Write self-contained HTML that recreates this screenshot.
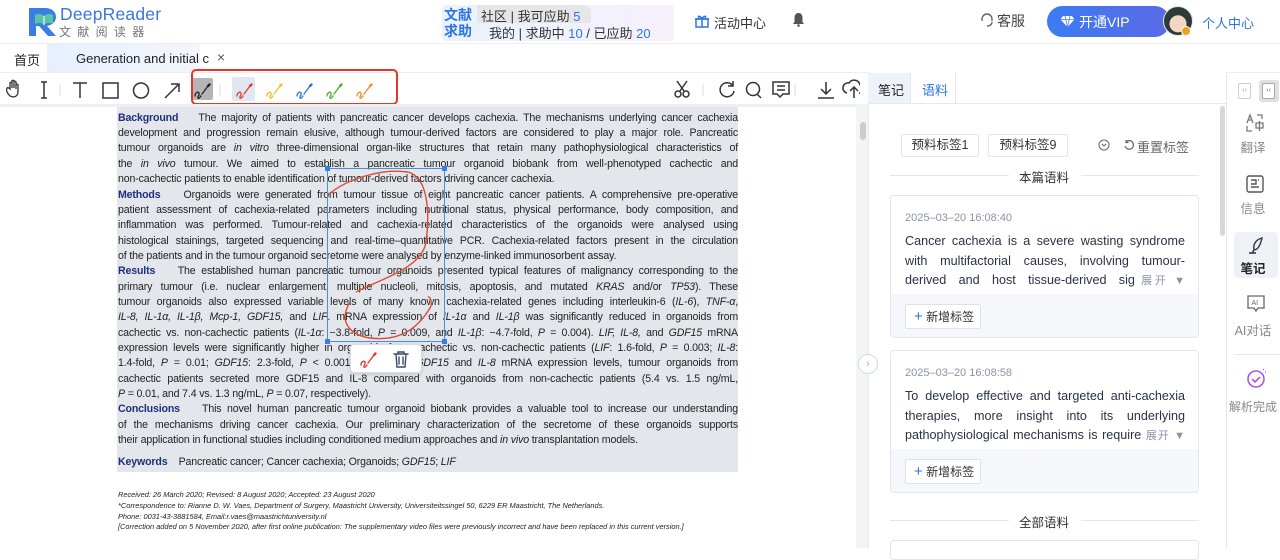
<!DOCTYPE html>
<html><head><meta charset="utf-8">
<style>
*{margin:0;padding:0;box-sizing:border-box}
body{width:1280px;height:548px;overflow:hidden;background:#fff;font-family:"Liberation Sans","Noto Sans CJK SC",sans-serif;position:relative;color:#333}
.abs{position:absolute}
.doc{position:absolute;left:0;top:104px;width:868px;height:444px;background:#fff;border-top:3px solid #eef0f3}
.hl{position:absolute;left:117px;top:107px;width:621px;height:365px;background:#e3e7ec}
.ln{position:absolute;left:118px;width:620px;font-family:"Liberation Sans",sans-serif;font-size:10.6px;line-height:14px;color:#222;text-align:justify;text-align-last:justify;white-space:nowrap;letter-spacing:-0.15px}
.ln.nj{text-align-last:left}
.ln b{color:#1f2f7a}
.fn{position:absolute;left:118px;font-size:7.4px;font-style:italic;color:#222;white-space:nowrap}
.panel{position:absolute;left:868px;top:72px;width:358px;height:476px;background:#fff;border-left:1px solid #e6e8ec}
.card{position:absolute;left:890px;width:309px;border:1px solid #e2e6ee;border-radius:4px;background:#fff;overflow:hidden}
.card .ts{position:absolute;left:14px;top:16px;font-size:11px;color:#8a93a6}
.card .tx{position:absolute;left:14px;width:280px;font-size:12.6px;line-height:19.7px;color:#2a3245;text-align:justify;text-align-last:justify;white-space:nowrap}
.card .ft{position:absolute;left:0;right:0;bottom:0;height:43px;background:#f5f7fa}
.card .btn{position:absolute;left:14px;top:10px;height:25px;width:76px;border:1px solid #dde2ea;background:#fff;font-size:12px;color:#333;line-height:23px;padding-left:8px;border-radius:2px}
.tag{position:absolute;top:134px;height:23px;border:1px solid #e2e5ea;border-radius:2px;font-size:12.5px;line-height:21px;color:#333;text-align:center}
.sb{position:absolute;left:1226px;width:54px;text-align:center;font-size:12px;color:#888}
</style></head><body>

<div class="abs" style="left:0;top:43px;width:1280px;height:1px;background:#eceef2"></div>
<svg class="abs" style="left:27px;top:6px" width="34" height="31" viewBox="0 0 34 31">
<path d="M2 2h16c7 0 11 4 11 9s-4 8-9 9l9 10h-8l-9-10h-3v10H2z" fill="#3b7de3"/>
<path d="M8 9c4-2 7-1 9 1 2-2 5-3 9-1v9c-4-2-7-1-9 1-2-2-5-3-9-1z" fill="#5cc2a8"/>
<path d="M17 10v9" stroke="#fff" stroke-width="1"/>
</svg>
<div class="abs" style="left:60px;top:4px;font-size:17.5px;color:#3a76dc;letter-spacing:0.2px">DeepReader</div>
<div class="abs" style="left:59px;top:23px;font-size:12px;color:#777;letter-spacing:6.3px">文献阅读器</div>

<div class="abs" style="left:442px;top:5px;width:232px;height:36px;border-radius:4px;background:linear-gradient(90deg,#e9f3ff,#f6f0fb)"></div>
<div class="abs" style="left:477px;top:5px;width:114px;height:18px;border-radius:0 8px 0 0;background:#e6e6e8"></div>
<div class="abs" style="left:444px;top:7px;font-size:14px;line-height:16px;color:#2c74e6;font-weight:bold;width:34px">文献<br>求助</div>
<div class="abs" style="left:481px;top:6px;font-size:13px;color:#333">社区 | 我可应助 <span style="color:#2c74e6">5</span></div>
<div class="abs" style="left:489px;top:23px;font-size:13px;color:#333">我的 | 求助中 <span style="color:#2c74e6">10</span> / 已应助 <span style="color:#2c74e6">20</span></div>

<svg class="abs" style="left:694px;top:13px" width="16" height="16" viewBox="0 0 16 16" fill="none" stroke="#2c74e6" stroke-width="1.5"><rect x="2" y="6" width="12" height="8"/><path d="M1 6h14M8 6v8M8 6C6 2 3 3 5 5M8 6c2-4 5-3 3-1"/></svg>
<div class="abs" style="left:714px;top:13px;font-size:13px;color:#333">活动中心</div>
<svg class="abs" style="left:792px;top:12px" width="13" height="15" viewBox="0 0 13 15"><path d="M6.5 1C3.5 1 2.5 3.5 2.5 6v4L1 12h11l-1.5-2V6c0-2.5-1-5-4-5z" fill="#555"/><circle cx="6.5" cy="13.5" r="1.3" fill="#555"/></svg>
<svg class="abs" style="left:980px;top:12px" width="14" height="16" viewBox="0 0 14 16" fill="none" stroke="#666" stroke-width="1.4"><path d="M2 9V7a5 5 0 0110 0v2M12 10c0 3-3 4-5 4"/></svg>
<div class="abs" style="left:997px;top:11px;font-size:14px;color:#444">客服</div>
<div class="abs" style="left:1047px;top:6px;width:123px;height:31px;border-radius:16px;background:linear-gradient(90deg,#3a7cf2,#5b6ae6)"></div>
<svg class="abs" style="left:1060px;top:15px" width="15" height="13" viewBox="0 0 15 13"><path d="M3 1h9l2.5 3.5L7.5 12 .5 4.5z" fill="#fff"/><path d="M.5 4.5h14M5 1l2.5 11L10 1" stroke="#5b7cf0" stroke-width=".8" fill="none"/></svg>
<div class="abs" style="left:1079px;top:12px;font-size:14px;color:#fff">开通VIP</div>
<div class="abs" style="left:1163px;top:6px;width:30px;height:30px;border-radius:50%;background:radial-gradient(circle at 50% 60%,#f4d6c3 0 38%,#2e3a3a 40%);border:1px solid #dfe6e3"></div>
<div class="abs" style="left:1181px;top:26px;width:10px;height:10px;border-radius:50%;background:#f0a020;border:1.5px solid #fff"></div>
<div class="abs" style="left:1202px;top:13px;font-size:13px;color:#2c74e6">个人中心</div>

<div class="abs" style="left:14px;top:50px;font-size:13px;color:#222">首页</div>
<div class="abs" style="left:47px;top:44px;width:153px;height:28px;background:linear-gradient(90deg,#e7f0ff,#f3f6fb)"></div>
<div class="abs" style="left:76px;top:51px;font-size:13px;color:#222">Generation and initial c</div>
<div class="abs" style="left:217px;top:49px;font-size:14px;color:#555">×</div>
<div class="abs" style="left:0;top:72px;width:1280px;height:1px;background:#eceef2"></div>

<svg class="abs" style="left:0;top:78px" width="860" height="24" viewBox="0 0 860 24" fill="none" stroke="#333" stroke-width="1.5">
<path d="M10 18c-3-3-4-6-3-8 1-1 2 0 3 1V5c0-1 2-1 2 0v5-7c0-1 2-1 2 0v7-6c0-1 2-1 2 0v7-4c0-1 2-1 2 0v6c0 4-2 6-5 6z" stroke-width="1.3"/>
<path d="M41 4h6M44 4v16M41 20h6"/>
<path d="M60 6v12" stroke="#ddd" stroke-width="1"/>
<path d="M73 5h14M80 5v15"/>
<rect x="103" y="5" width="15" height="15"/>
<circle cx="141" cy="12.5" r="7.5"/>
<path d="M165 20L178 7M171 6h8v8" />
<path d="M220 6v12" stroke="#ddd" stroke-width="1"/>
<path d="M703 6v12M795 6v12" stroke="#ddd" stroke-width="1"/>
<circle cx="678" cy="16" r="3"/><circle cx="686" cy="16" r="3"/><path d="M680 13l7-10M684 13l-7-10"/>
<path d="M733 8a7 7 0 10 1 5M733 3v5h-5"/>
<circle cx="753" cy="11" r="6.5"/><path d="M757 16l4 4"/>
<path d="M773 4h16v12h-6l-3 3-3-3h-4zM777 8h8M777 12h8"/>
<path d="M826 4v12M821 11l5 5 5-5M818 20h16"/>
<path d="M847 15a5 5 0 01 2-10 6 6 0 0111 2 4 4 0 01-1 8M854 20v-10M850 13l4-4 4 4"/>
</svg>
<div class="abs" style="left:191px;top:78px;width:22px;height:22px;background:#b5b5b5;border-radius:2px"></div>
<div class="abs" style="left:232px;top:77px;width:23px;height:24px;background:#dfe7f3;border-radius:2px"></div>
<svg class="abs" style="left:190px;top:78px" width="200" height="24" viewBox="0 0 200 24" fill="none" stroke-width="1.3" stroke-linecap="round">
<g stroke="#222"><path d="M5 18c0-3 3-5 4-3s-2 4-1 5 2-1 3-2M12 16l6-8"/><path d="M18 8l1.5-1.5" stroke-width="2.4"/></g>
<g stroke="#e03b2e"><path d="M47 18c0-3 3-5 4-3s-2 4-1 5 2-1 3-2M54 16l6-8"/><path d="M60 8l1.5-1.5" stroke-width="2.4"/></g>
<g stroke="#f5c21b"><path d="M77 18c0-3 3-5 4-3s-2 4-1 5 2-1 3-2M84 16l6-8"/><path d="M90 8l1.5-1.5" stroke-width="2.4"/></g>
<g stroke="#2c74e6"><path d="M107 18c0-3 3-5 4-3s-2 4-1 5 2-1 3-2M114 16l6-8"/><path d="M120 8l1.5-1.5" stroke-width="2.4"/></g>
<g stroke="#48b02d"><path d="M137 18c0-3 3-5 4-3s-2 4-1 5 2-1 3-2M144 16l6-8"/><path d="M150 8l1.5-1.5" stroke-width="2.4"/></g>
<g stroke="#f08a24"><path d="M167 18c0-3 3-5 4-3s-2 4-1 5 2-1 3-2M174 16l6-8"/><path d="M180 8l1.5-1.5" stroke-width="2.4"/></g>
</svg>
<div class="abs" style="left:191px;top:69px;width:207px;height:36px;border:2px solid #e2372b;border-radius:5px"></div>

<div class="doc"></div>
<div class="abs" style="left:856px;top:104px;width:12px;height:444px;background:#f3f4f6"></div>
<div class="abs" style="left:860px;top:122px;width:6px;height:18px;border-radius:3px;background:#c9ccd1"></div>
<div class="hl"></div>
<div class="ln" style="top:111px"><b>Background</b>&nbsp;&nbsp;&nbsp; The majority of patients with pancreatic cancer develops cachexia. The mechanisms underlying cancer cachexia</div>
<div class="ln" style="top:126px">development and progression remain elusive, although tumour-derived factors are considered to play a major role. Pancreatic</div>
<div class="ln" style="top:141px">tumour organoids are <i>in vitro</i> three-dimensional organ-like structures that retain many pathophysiological characteristics of</div>
<div class="ln" style="top:157px">the <i>in vivo</i> tumour. We aimed to establish a pancreatic tumour organoid biobank from well-phenotyped cachectic and</div>
<div class="ln nj" style="top:172px">non-cachectic patients to enable identification of tumour-derived factors driving cancer cachexia.</div>
<div class="ln" style="top:188px"><b>Methods</b>&nbsp;&nbsp;&nbsp; Organoids were generated from tumour tissue of eight pancreatic cancer patients. A comprehensive pre-operative</div>
<div class="ln" style="top:203px">patient assessment of cachexia-related parameters including nutritional status, physical performance, body composition, and</div>
<div class="ln" style="top:218px">inflammation was performed. Tumour-related and cachexia-related characteristics of the organoids were analysed using</div>
<div class="ln" style="top:234px">histological stainings, targeted sequencing and real-time–quantitative PCR. Cachexia-related factors present in the circulation</div>
<div class="ln nj" style="top:249px">of the patients and in the tumour organoid secretome were analysed by enzyme-linked immunosorbent assay.</div>
<div class="ln" style="top:264px"><b>Results</b>&nbsp;&nbsp;&nbsp; The established human pancreatic tumour organoids presented typical features of malignancy corresponding to the</div>
<div class="ln" style="top:280px">primary tumour (i.e. nuclear enlargement, multiple nucleoli, mitosis, apoptosis, and mutated <i>KRAS</i> and/or <i>TP53</i>). These</div>
<div class="ln" style="top:295px">tumour organoids also expressed variable levels of many known cachexia-related genes including interleukin-6 (<i>IL-6</i>), <i>TNF-α</i>,</div>
<div class="ln" style="top:310px"><i>IL-8, IL-1α, IL-1β, Mcp-1, GDF15,</i> and <i>LIF</i>. mRNA expression of <i>IL-1α</i> and <i>IL-1β</i> was significantly reduced in organoids from</div>
<div class="ln" style="top:326px">cachectic vs. non-cachectic patients (<i>IL-1α</i>: −3.8-fold, <i>P</i> = 0.009, and <i>IL-1β</i>: −4.7-fold, <i>P</i> = 0.004). <i>LIF, IL-8,</i> and <i>GDF15</i> mRNA</div>
<div class="ln" style="top:341px">expression levels were significantly higher in organoids from cachectic vs. non-cachectic patients (<i>LIF</i>: 1.6-fold, <i>P</i> = 0.003; <i>IL-8</i>:</div>
<div class="ln" style="top:356px">1.4-fold, <i>P</i> = 0.01; <i>GDF15</i>: 2.3-fold, <i>P</i> &lt; 0.001). Based on <i>GDF15</i> and <i>IL-8</i> mRNA expression levels, tumour organoids from</div>
<div class="ln" style="top:372px">cachectic patients secreted more GDF15 and IL-8 compared with organoids from non-cachectic patients (5.4 vs. 1.5 ng/mL,</div>
<div class="ln nj" style="top:387px"><i>P</i> = 0.01, and 7.4 vs. 1.3 ng/mL, <i>P</i> = 0.07, respectively).</div>
<div class="ln" style="top:402px"><b>Conclusions</b>&nbsp;&nbsp;&nbsp; This novel human pancreatic tumour organoid biobank provides a valuable tool to increase our understanding</div>
<div class="ln" style="top:418px">of the mechanisms driving cancer cachexia. Our preliminary characterization of the secretome of these organoids supports</div>
<div class="ln nj" style="top:433px">their application in functional studies including conditioned medium approaches and <i>in vivo</i> transplantation models.</div>
<div class="ln nj" style="top:455px"><b>Keywords</b>&nbsp;&nbsp;&nbsp; Pancreatic cancer; Cancer cachexia; Organoids; <i>GDF15</i>; <i>LIF</i></div>

<div class="fn" style="top:490px">Received: 26 March 2020; Revised: 8 August 2020; Accepted: 23 August 2020</div>
<div class="fn" style="top:501px">*Correspondence to: Rianne D. W. Vaes, Department of Surgery, Maastricht University, Universiteitssingel 50, 6229 ER Maastricht, The Netherlands.</div>
<div class="fn" style="top:512px">Phone: 0031-43-3881584, Email:r.vaes@maastrichtuniversity.nl</div>
<div class="fn" style="top:522px">[Correction added on 5 November 2020, after first online publication: The supplementary video files were previously incorrect and have been replaced in this current version.]</div>

<svg class="abs" style="left:320px;top:160px" width="130" height="190" viewBox="0 0 130 190" fill="none">
<rect x="7.5" y="8.5" width="117" height="173" stroke="#4a8ee0" stroke-width="1"/>
<rect x="5" y="6" width="5" height="5" fill="#3b7de3"/><rect x="122" y="6" width="5" height="5" fill="#3b7de3"/>
<rect x="5" y="179" width="5" height="5" fill="#3b7de3"/><rect x="122" y="179" width="5" height="5" fill="#3b7de3"/>
<path d="M8 35C25 20 60 8 88 12c20 5 22 40 18 70-4 25-40 35-70 50" stroke="#e04a35" stroke-width="1.4"/>
<path d="M30 142c-12 20 0 33 20 36 25 3 45-5 60-30 3-5 0-12-2-11" stroke="#e04a35" stroke-width="1.4"/>
</svg>
<div class="abs" style="left:350px;top:344px;width:72px;height:29px;background:#fff;border:1px solid #d8dbe0;border-radius:4px;box-shadow:0 1px 4px rgba(0,0,0,.15)"></div>
<svg class="abs" style="left:358px;top:350px" width="60" height="18" viewBox="0 0 60 18" fill="none" stroke-width="1.4" stroke-linecap="round">
<g stroke="#e03b2e"><path d="M3 15c0-3 3-5 4-3s-2 4-1 5 2-1 3-2M10 13l6-8"/><path d="M16 5l1.5-1.5" stroke-width="2.4"/></g>
<g stroke="#3a4a66"><path d="M36 4h14M40 4V2h6v2M38 4l1 13h8l1-13M41 7v7M45 7v7"/></g>
</svg>

<div class="panel"></div>
<div class="abs" style="left:868px;top:73px;width:42px;height:30px;background:#eef3fb"></div>
<div class="abs" style="left:878px;top:80px;font-size:13px;color:#222">笔记</div>
<div class="abs" style="left:910px;top:73px;width:1px;height:30px;background:#e6e8ec"></div>
<div class="abs" style="left:955px;top:73px;width:1px;height:30px;background:#e6e8ec"></div>
<div class="abs" style="left:922px;top:80px;font-size:13px;color:#2c74e6">语料</div>
<div class="abs" style="left:868px;top:103px;width:358px;height:1px;background:#e6e8ec"></div>
<div class="abs" style="left:1220px;top:106px;width:5px;height:130px;border-radius:3px;background:#d6d8dc"></div>
<div class="abs" style="left:858px;top:354px;width:20px;height:20px;border-radius:50%;border:1px solid #d6d8dc;background:#fff;font-size:11px;color:#aaa;text-align:center;line-height:18px">›</div>

<div class="tag" style="left:901px;width:78px">预料标签1</div>
<div class="tag" style="left:988px;width:80px">预料标签9</div>
<svg class="abs" style="left:1098px;top:139px" width="12" height="12" viewBox="0 0 12 12" fill="none" stroke="#666"><circle cx="6" cy="6" r="5"/><path d="M4 5l2 2 2-2"/></svg>
<svg class="abs" style="left:1123px;top:139px" width="12" height="12" viewBox="0 0 12 12" fill="none" stroke="#666" stroke-width="1.2"><path d="M3 3a4.3 4.3 0 11-1 4M3 1v2.5h2.5"/></svg>
<div class="abs" style="left:1137px;top:137px;font-size:13px;color:#666">重置标签</div>

<div class="abs" style="left:890px;top:175px;width:119px;height:1px;background:#e3e6ec"></div>
<div class="abs" style="left:1081px;top:175px;width:118px;height:1px;background:#e3e6ec"></div>
<div class="abs" style="left:1019px;top:167px;font-size:12.5px;color:#333">本篇语料</div>

<div class="card" style="top:195px;height:143px">
<div class="ts">2025–03–20 16:08:40</div>
<div class="tx" style="top:36px">Cancer cachexia is a severe wasting syndrome<br>with multifactorial causes, involving tumour-<br>derived&nbsp; and&nbsp; host&nbsp; tissue-derived&nbsp; sig <span style="font-size:11px;color:#8a93a6">展开 ▼</span></div>
<div class="ft"><div class="btn"><span style="color:#2c74e6;font-size:15px">+</span> 新增标签</div></div>
</div>
<div class="card" style="top:350px;height:143px">
<div class="ts">2025–03–20 16:08:58</div>
<div class="tx" style="top:36px">To develop effective and targeted anti-cachexia<br>therapies,&nbsp; more&nbsp; insight&nbsp; into&nbsp; its&nbsp; underlying<br>pathophysiological mechanisms is require <span style="font-size:11px;color:#8a93a6">展开 ▼</span></div>
<div class="ft"><div class="btn"><span style="color:#2c74e6;font-size:15px">+</span> 新增标签</div></div>
</div>
<div class="abs" style="left:890px;top:520px;width:119px;height:1px;background:#e3e6ec"></div>
<div class="abs" style="left:1081px;top:520px;width:118px;height:1px;background:#e3e6ec"></div>
<div class="abs" style="left:1019px;top:512px;font-size:12.5px;color:#333">全部语料</div>
<div class="card" style="top:540px;height:20px"></div>

<div class="abs" style="left:1226px;top:73px;width:1px;height:475px;background:#e6e8ec"></div>
<div class="abs" style="left:1238px;top:83px;width:13px;height:16px;border:1px solid #ccc;border-radius:2px;font-size:7px;color:#999;text-align:center;line-height:14px">‹›</div>
<div class="abs" style="left:1259px;top:80px;width:20px;height:22px;background:#e0e0e0;border-radius:3px"></div>
<div class="abs" style="left:1262px;top:83px;width:13px;height:16px;border:1px solid #aaa;border-radius:2px;background:#fff;font-size:7px;color:#666;text-align:center;line-height:14px">›‹</div>
<svg class="abs" style="left:1245px;top:113px" width="20" height="20" viewBox="0 0 20 20" fill="none" stroke="#777" stroke-width="1.3"><path d="M2 10L5 2l3 8M3 7h4M12 2h5v4M2 13v5h5M11 10h7v5h-7zM14.5 8v10"/></svg>
<div class="sb" style="top:137px;font-size:12.5px">翻译</div>
<svg class="abs" style="left:1245px;top:174px" width="20" height="20" viewBox="0 0 20 20" fill="none" stroke="#555" stroke-width="1.4"><rect x="2" y="2" width="16" height="16" rx="2"/><path d="M6 6h5v4H6M6 13h8M13 6h1"/></svg>
<div class="sb" style="top:198px;font-size:12.5px">信息</div>
<div class="abs" style="left:1234px;top:232px;width:44px;height:46px;background:#eef1f6;border-radius:4px"></div>
<svg class="abs" style="left:1246px;top:236px" width="20" height="20" viewBox="0 0 20 20" fill="none" stroke="#333" stroke-width="1.4"><path d="M16 2C9 4 7 9 8 14l3-1c3-3 4-7 5-11zM8 14l-2 3M3 17h7"/></svg>
<div class="sb" style="top:258px;font-size:12.5px;color:#222;font-weight:bold">笔记</div>
<svg class="abs" style="left:1246px;top:294px" width="20" height="20" viewBox="0 0 20 20" fill="none" stroke="#666" stroke-width="1.3"><path d="M2 2h16v12h-6l-2 3-2-3H2z"/><text x="5.5" y="11" font-size="7" fill="#666" stroke="none" font-family="Liberation Sans">AI</text></svg>
<div class="sb" style="top:320px;font-size:12.5px">AI对话</div>
<div class="abs" style="left:1234px;top:354px;width:46px;height:1px;background:#e6e8ec"></div>
<svg class="abs" style="left:1246px;top:367px" width="22" height="22" viewBox="0 0 22 22" fill="none" stroke="#a855e8" stroke-width="1.6"><circle cx="10" cy="12" r="8"/><path d="M6 12l3 3 5-5"/><path d="M17 3l1-1M19 5l1 0" stroke-width="1.2"/></svg>
<div class="sb" style="top:398px;font-size:12px">解析完成</div>
</body></html>
